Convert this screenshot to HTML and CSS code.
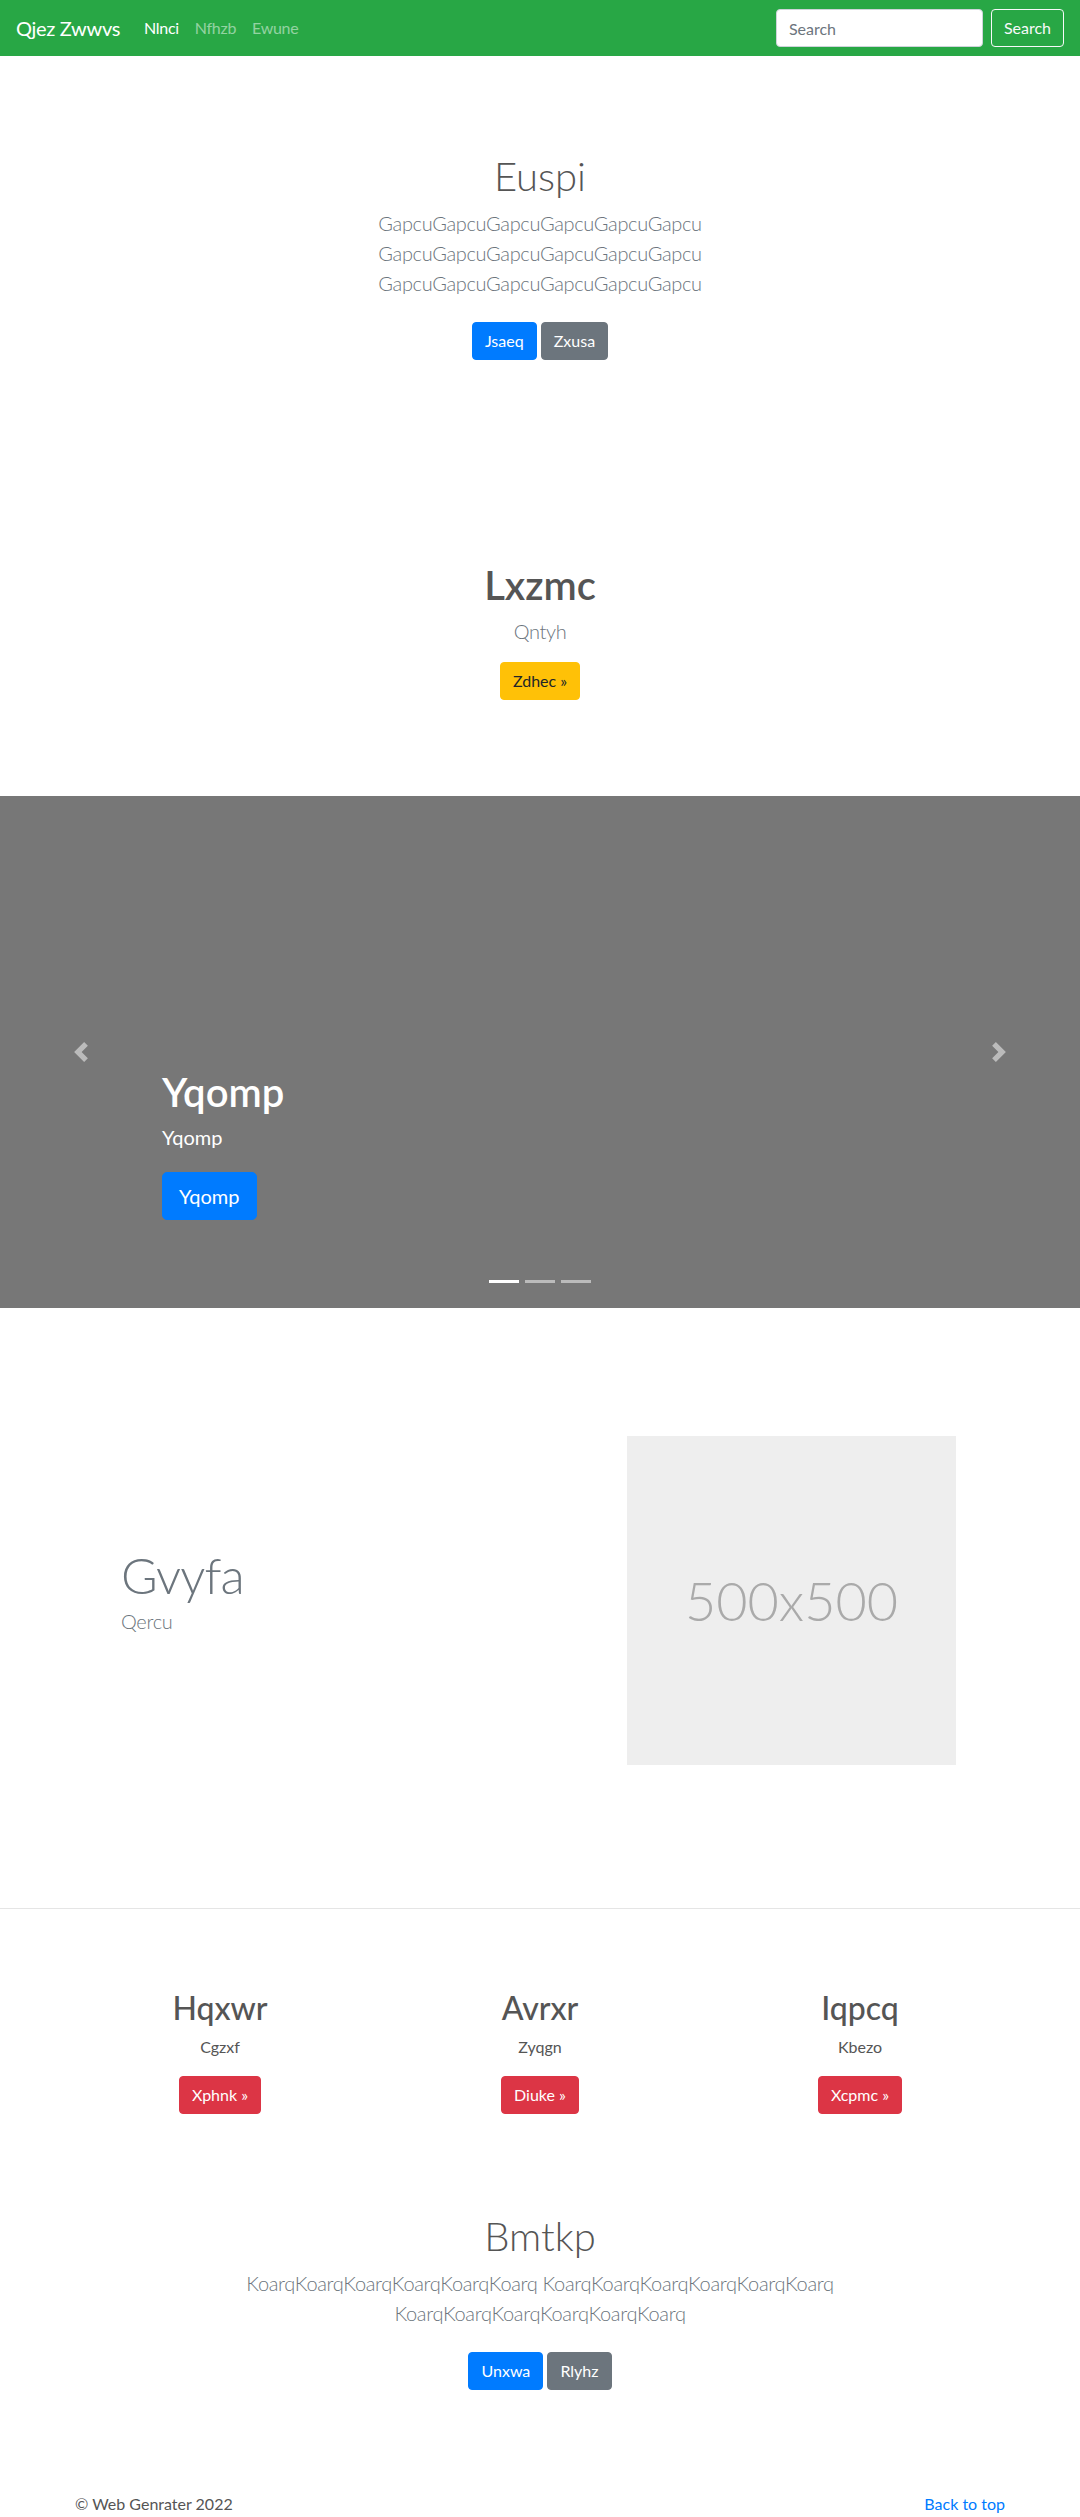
FILE: index.html
```html
<!DOCTYPE html>
<html lang="en">
<head>
<meta charset="utf-8">
<title>Qjez Zwwvs</title>
<link rel="stylesheet" href="styles.css">
</head>
<body>
<nav class="navbar">
  <a class="brand" href="#">Qjez Zwwvs</a>
  <ul class="nav-links">
    <li><a class="nav-link active" href="#">Nlnci</a></li>
    <li><a class="nav-link" href="#">Nfhzb</a></li>
    <li><a class="nav-link" href="#">Ewune</a></li>
  </ul>
  <form class="search">
    <input class="search-input" type="text" placeholder="Search">
    <button class="btn btn-outline-light" type="button">Search</button>
  </form>
</nav>

<main>
  <section class="hero">
    <h1 class="display-light">Euspi</h1>
    <p class="lead muted hero-lead">GapcuGapcuGapcuGapcuGapcuGapcu GapcuGapcuGapcuGapcuGapcuGapcu GapcuGapcuGapcuGapcuGapcuGapcu</p>
    <p class="actions">
      <a class="btn btn-primary" href="#">Jsaeq</a>
      <a class="btn btn-secondary" href="#">Zxusa</a>
    </p>
  </section>

  <section class="promo">
    <h1 class="promo-title">Lxzmc</h1>
    <p class="lead muted promo-lead">Qntyh</p>
    <p><a class="btn btn-warning" href="#">Zdhec &raquo;</a></p>
  </section>

  <section class="carousel">
    <a class="carousel-control prev" href="#">
      <svg width="20" height="20" viewBox="0 0 8 8"><path fill="#fff" d="M5.25 0l-4 4 4 4 1.5-1.5L4.25 4l2.5-2.5L5.25 0z"/></svg>
    </a>
    <a class="carousel-control next" href="#">
      <svg width="20" height="20" viewBox="0 0 8 8"><path fill="#fff" d="M2.75 0l-1.5 1.5L3.75 4l-2.5 2.5L2.75 8l4-4-4-4z"/></svg>
    </a>
    <div class="carousel-caption">
      <h1 class="caption-title">Yqomp</h1>
      <p class="caption-text">Yqomp</p>
      <p><a class="btn btn-lg btn-primary" href="#">Yqomp</a></p>
    </div>
    <ol class="carousel-indicators">
      <li class="active"></li>
      <li></li>
      <li></li>
    </ol>
  </section>

  <section class="featurette">
    <div class="featurette-text">
      <h2 class="featurette-heading">Gvyfa</h2>
      <p class="lead muted featurette-lead">Qercu</p>
    </div>
    <div class="placeholder">500x500</div>
  </section>

  <hr class="divider">

  <section class="marketing">
    <div class="col">
      <h2 class="col-title">Hqxwr</h2>
      <p class="col-text">Cgzxf</p>
      <p><a class="btn btn-danger" href="#">Xphnk &raquo;</a></p>
    </div>
    <div class="col">
      <h2 class="col-title">Avrxr</h2>
      <p class="col-text">Zyqgn</p>
      <p><a class="btn btn-danger" href="#">Diuke &raquo;</a></p>
    </div>
    <div class="col">
      <h2 class="col-title">Iqpcq</h2>
      <p class="col-text">Kbezo</p>
      <p><a class="btn btn-danger" href="#">Xcpmc &raquo;</a></p>
    </div>
  </section>

  <section class="closing">
    <h1 class="display-light">Bmtkp</h1>
    <p class="lead muted closing-lead">KoarqKoarqKoarqKoarqKoarqKoarq KoarqKoarqKoarqKoarqKoarqKoarq KoarqKoarqKoarqKoarqKoarqKoarq</p>
    <p class="actions">
      <a class="btn btn-primary" href="#">Unxwa</a>
      <a class="btn btn-secondary" href="#">Rlyhz</a>
    </p>
  </section>
</main>

<footer class="footer">
  <p class="copy">&copy; Web Genrater 2022</p>
  <p><a class="to-top" href="#">Back to top</a></p>
</footer>
</body>
</html>
```

FILE: styles.css
```css
* { box-sizing: border-box; }

html, body {
  margin: 0;
  padding: 0;
}

body {
  font-family: Lato, "Liberation Sans", Arial, sans-serif;
  font-size: 16px;
  line-height: 1.5;
  color: #555;
  background: #fff;
}

h1, h2, p { margin: 0; }

a { text-decoration: none; }

/* ---------- navbar ---------- */
.navbar {
  display: flex;
  align-items: center;
  height: 56px;
  padding: 8px 16px;
  background: #28a745;
}

.brand {
  font-size: 20px;
  line-height: 30px;
  padding: 5px 0;
  margin-right: 16px;
  letter-spacing: -.3px;
  color: #fff;
}

.nav-links {
  display: flex;
  flex: 1;
  list-style: none;
  margin: 0;
  padding: 0;
}

.nav-link {
  display: block;
  padding: 8px;
  letter-spacing: -.3px;
  color: rgba(255, 255, 255, .5);
}

.nav-link.active { color: #fff; }

.search {
  display: flex;
  align-items: center;
  margin: 0;
}

.search-input {
  width: 207px;
  height: 38px;
  margin-right: 8px;
  padding: 6px 12px;
  font-family: inherit;
  font-size: 16px;
  line-height: 24px;
  color: #495057;
  background: #fff;
  border: 1px solid #ced4da;
  border-radius: 4px;
}

.search-input::placeholder { color: #6c757d; }

/* ---------- buttons ---------- */
.btn {
  display: inline-block;
  padding: 6px 12px;
  font-family: inherit;
  font-size: 16px;
  font-weight: 400;
  line-height: 24px;
  text-align: center;
  vertical-align: middle;
  border: 1px solid transparent;
  border-radius: 4px;
  cursor: pointer;
}

.btn-lg {
  padding: 8px 16px;
  font-size: 20px;
  line-height: 30px;
  border-radius: 5px;
}

.btn-outline-light { color: #f8f9fa; background: transparent; border-color: #f8f9fa; }
.btn-primary { color: #fff; background: #007bff; border-color: #007bff; }
.btn-secondary { color: #fff; background: #6c757d; border-color: #6c757d; }
.btn-warning { color: #212529; background: #ffc107; border-color: #ffc107; }
.btn-danger { color: #fff; background: #dc3545; border-color: #dc3545; }

/* ---------- text helpers ---------- */
.lead {
  font-size: 20px;
  line-height: 30px;
  font-weight: 300;
  letter-spacing: -.33px;
}

.muted { color: #6c757d; }

.display-light {
  font-size: 40px;
  line-height: 48px;
  font-weight: 300;
  margin-bottom: 8px;
}

.actions .btn { margin: 8px 0; }

/* ---------- hero ---------- */
.hero {
  padding: 96px 32px 96px;
  text-align: center;
}

.hero-lead {
  max-width: 560px;
  margin: 0 auto 16px;
}

/* ---------- promo ---------- */
.promo {
  padding: 97px 32px 96px;
  text-align: center;
}

.promo-title {
  font-size: 40px;
  line-height: 48px;
  font-weight: 600;
  margin-bottom: 7px;
}

.promo-lead { margin-bottom: 16px; }

/* ---------- carousel ---------- */
.carousel {
  position: relative;
  height: 512px;
  background: #777;
  overflow: hidden;
}

.carousel-control {
  position: absolute;
  top: 0;
  bottom: 0;
  width: 15%;
  display: flex;
  align-items: center;
  justify-content: center;
  opacity: .5;
}

.carousel-control.prev { left: 0; }
.carousel-control.next { right: 0; }

.carousel-caption {
  position: absolute;
  left: 15%;
  right: 15%;
  bottom: 88px;
  color: #fff;
  text-align: left;
}

.caption-title {
  font-size: 40px;
  line-height: 48px;
  font-weight: 600;
  margin-bottom: 6px;
}

.caption-text {
  font-size: 20px;
  line-height: 30px;
  margin-bottom: 20px;
}

.carousel-indicators {
  position: absolute;
  left: 0;
  right: 0;
  bottom: 25px;
  display: flex;
  justify-content: center;
  margin: 0;
  padding: 0;
  list-style: none;
}

.carousel-indicators li {
  width: 30px;
  height: 3px;
  margin: 0 3px;
  background: #fff;
  opacity: .5;
}

.carousel-indicators li.active { opacity: 1; }

/* ---------- featurette ---------- */
.featurette {
  display: flex;
  align-items: center;
  margin-top: 128px;
  padding: 0 124px 0 121px;
}

.featurette-text { flex: 1; }

.featurette-heading {
  font-size: 50px;
  line-height: 1;
  font-weight: 300;
  letter-spacing: -.8px;
  color: #6c757d;
  margin-bottom: 6px;
}

.featurette-lead { margin-bottom: 16px; }

.placeholder {
  width: 329px;
  height: 329px;
  display: flex;
  align-items: center;
  justify-content: center;
  background: #eee;
  color: #aaa;
  font-size: 54px;
  font-weight: 300;
}

/* ---------- divider ---------- */
.divider {
  height: 0;
  margin: 143px 0 0;
  border: 0;
  border-top: 1px solid rgba(0, 0, 0, .1);
}

/* ---------- marketing columns ---------- */
.marketing {
  display: flex;
  width: 960px;
  margin: 80px auto 0;
}

.col {
  flex: 1;
  padding: 0 15px;
  text-align: center;
}

.col-title {
  font-size: 32px;
  line-height: 38.4px;
  font-weight: 500;
  margin-bottom: 8px;
}

.col-text { margin-bottom: 17px; }

/* ---------- closing ---------- */
.closing {
  padding: 98px 32px 0;
  text-align: center;
}

.closing-lead {
  max-width: 700px;
  margin: 0 auto 16px;
}

/* ---------- footer ---------- */
.footer {
  display: flex;
  justify-content: space-between;
  width: 960px;
  margin: 94px auto 0;
  padding: 0 15px;
}

.to-top { color: #007bff; }
```
